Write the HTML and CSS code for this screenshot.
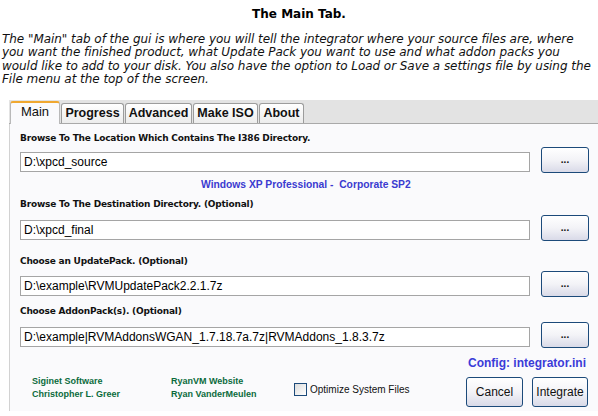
FILE: index.html
```html
<!DOCTYPE html>
<html lang="en">
<head>
  <meta charset="UTF-8">
  <title>The Main Tab</title>
  <link rel="stylesheet" href="styles.css">
</head>
<body>
  <h1 class="title">The Main Tab.</h1>
  <p class="intro">The "Main" tab of the gui is where you will tell the integrator where your source files are, where you want the finished product, what Update Pack you want to use and what addon packs you would like to add to your disk. You also have the option to Load or Save a settings file by using the File menu at the top of the screen.</p>

  <div class="window">
    <div class="tabs">
      <div class="tab active">Main</div>
      <div class="tab tab-progress">Progress</div>
      <div class="tab tab-advanced">Advanced</div>
      <div class="tab tab-iso">Make ISO</div>
      <div class="tab tab-about">About</div>
    </div>
    <div class="panel">
      <div class="label label-first">Browse To The Location Which Contains The I386 Directory.</div>
      <div class="row row-first">
        <div class="path">D:\xpcd_source</div>
        <button class="browse">...</button>
      </div>
      <div class="os-name">Windows XP Professional -&nbsp; Corporate SP2</div>

      <div class="label label-dest">Browse To The Destination Directory. (Optional)</div>
      <div class="row row-dest">
        <div class="path">D:\xpcd_final</div>
        <button class="browse">...</button>
      </div>

      <div class="label label-pack">Choose an UpdatePack. (Optional)</div>
      <div class="row row-pack">
        <div class="path">D:\example\RVMUpdatePack2.2.1.7z</div>
        <button class="browse">...</button>
      </div>

      <div class="label label-addon">Choose AddonPack(s). (Optional)</div>
      <div class="row row-addon">
        <div class="path">D:\example|RVMAddonsWGAN_1.7.18.7a.7z|RVMAddons_1.8.3.7z</div>
        <button class="browse">...</button>
      </div>

      <div class="config">Config: integrator.ini</div>

      <div class="footer">
        <div class="credit credit-siginet">Siginet Software<br>Christopher L. Greer</div>
        <div class="credit credit-ryan">RyanVM Website<br>Ryan VanderMeulen</div>
        <label class="optimize"><span class="check"></span>Optimize System Files</label>
        <button class="action cancel">Cancel</button>
        <button class="action integrate">Integrate</button>
      </div>
    </div>
  </div>
</body>
</html>
```

FILE: styles.css
```css
body {
  margin: 0;
  padding: 0;
  background: #fff;
  color: #000;
  font-family: 'DejaVu Sans', Verdana, sans-serif;
  width: 598px;
  height: 416px;
  overflow: hidden;
}
.title {
  margin: 6px 0 0 0;
  font-size: 12px;
  line-height: 16px;
  font-weight: bold;
  text-align: center;
}
.intro {
  margin: 11px 0 0 2px;
  width: 594px;
  font-size: 12px;
  line-height: 13.4px;
  letter-spacing: -0.05px;
  font-style: italic;
  color: #111;
}
.window {
  margin: 13px 0 0 9px;
}
.tabs {
  height: 24px;
  background: #e3e3e3;
  display: flex;
  align-items: flex-end;
  padding-left: 1px;
  border-bottom: 1px solid #a9a9a9;
  box-sizing: border-box;
}
.tab {
  height: 20px;
  box-sizing: border-box;
  margin-right: 1px;
  border: 1px solid #9c9c9c;
  border-bottom: none;
  border-radius: 3px 3px 0 0;
  background: linear-gradient(#ffffff, #ececec);
  font-family: 'Liberation Sans', Arial, sans-serif;
  font-weight: bold;
  font-size: 12.5px;
  line-height: 19px;
  text-align: center;
  color: #111;
}
.tab.active {
  width: 50px;
  height: 23px;
  margin-bottom: -1px;
  border-color: #b9b9b9;
  border-top: 2px solid #f0a830;
  background: #fafafc;
  font-weight: normal;
  line-height: 18px;
  font-size: 13px;
}
.tab-progress { width: 63px; }
.tab-advanced { width: 67px; }
.tab-iso { width: 65px; }
.tab-about { width: 45px; }
.panel {
  height: 287px;
  background: #fafafc;
  border-left: 1px solid #d2d2d2;
  padding: 7px 0 0 10px;
  box-sizing: border-box;
}
.label {
  font-size: 9px;
  line-height: 14px;
  font-weight: bold;
  color: #111;
  letter-spacing: -0.2px;
}
.row {
  display: flex;
  align-items: flex-start;
  gap: 11px;
}
.row-first { margin-top: 2px; }
.label-dest { margin-top: 5px; }
.row-dest { margin-top: 4px; }
.label-pack { margin-top: 13px; }
.row-pack { margin-top: 3px; }
.label-addon { margin-top: 7px; }
.row-addon { margin-top: 4px; }
.path {
  width: 510px;
  height: 20px;
  margin-top: 5px;
  box-sizing: border-box;
  border: 1px solid #a5a5a5;
  background: #fff;
  font-family: 'Liberation Sans', Arial, sans-serif;
  font-size: 12px;
  line-height: 18px;
  padding-left: 3px;
  white-space: nowrap;
  overflow: hidden;
}
.browse, .action {
  width: 48px;
  height: 26px;
  box-sizing: border-box;
  border: 1px solid #1c4a7a;
  border-radius: 3px;
  background: linear-gradient(#ffffff 0%, #f3f3f7 50%, #d9dae8 100%);
  font-family: 'Liberation Sans', Arial, sans-serif;
  font-size: 12px;
  color: #111;
  padding: 0;
  margin: 0;
}
.browse {
  font-size: 10px;
  font-weight: bold;
  line-height: 14px;
}
.os-name {
  margin-top: 5px;
  font-family: 'Liberation Sans', Arial, sans-serif;
  font-size: 10.3px;
  font-weight: bold;
  line-height: 14px;
  color: #3b3bd0;
  padding-left: 181px;
}
.config {
  margin-top: 7px;
  text-align: right;
  padding-right: 12px;
  font-family: 'Liberation Sans', Arial, sans-serif;
  font-size: 12px;
  font-weight: bold;
  line-height: 16px;
  color: #3b3bd8;
}
.footer {
  margin-top: 4px;
  display: flex;
  align-items: flex-start;
}
.credit {
  font-family: 'Liberation Sans', Arial, sans-serif;
  font-size: 9px;
  font-weight: bold;
  line-height: 13px;
  color: #0b6b3c;
}
.credit-siginet {
  margin-left: 12px;
  width: 139px;
}
.credit-ryan {
  width: 123px;
}
.optimize {
  display: flex;
  align-items: center;
  margin-top: 8px;
  font-family: 'Liberation Sans', Arial, sans-serif;
  font-size: 10px;
  color: #111;
}
.check {
  width: 13px;
  height: 13px;
  box-sizing: border-box;
  border: 1px solid #1c4a7a;
  background: linear-gradient(135deg, #dcdcdc, #ffffff);
  margin-right: 3px;
}
.action {
  margin-top: 2px;
  height: 30px;
}
.cancel {
  width: 57px;
  margin-left: auto;
}
.integrate {
  width: 56px;
  margin-left: 9px;
  margin-right: 10px;
}
```
